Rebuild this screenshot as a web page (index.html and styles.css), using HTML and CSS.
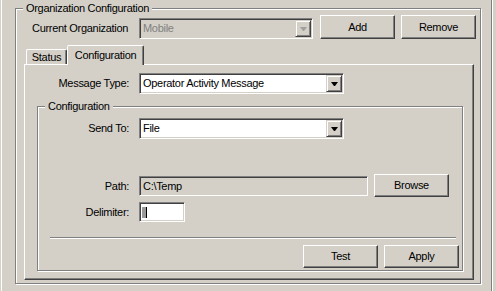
FILE: index.html
```html
<!DOCTYPE html>
<html>
<head>
  <meta charset="UTF-8">
  <title>Organization Configuration</title>
  <link rel="stylesheet" href="styles.css">
</head>
<body>
  <div class="window">
    <div class="group outer">
      <div class="group-title">Organization Configuration</div>

      <div class="org-row">
        <label class="org-label">Current Organization</label>
        <div class="combo disabled org-combo">
          <span class="combo-text">Mobile</span>
          <span class="drop"><i class="arrow"></i></span>
        </div>
        <button class="btn tall add-btn">Add</button>
        <button class="btn tall">Remove</button>
      </div>

      <div class="tabs">
        <div class="tab status-tab">Status</div>
        <div class="tab active config-tab">Configuration</div>
      </div>

      <div class="tab-page">
        <div class="row msg-row">
          <label class="field-label page-label">Message Type:</label>
          <div class="combo wide">
            <span class="combo-text">Operator Activity Message</span>
            <span class="drop"><i class="arrow"></i></span>
          </div>
        </div>

        <div class="group inner">
          <div class="group-title">Configuration</div>

          <div class="row send-row">
            <label class="field-label">Send To:</label>
            <div class="combo wide">
              <span class="combo-text">File</span>
              <span class="drop"><i class="arrow"></i></span>
            </div>
          </div>

          <div class="row path-row">
            <label class="field-label boxed">Path:</label>
            <div class="textbox readonly path-box">C:\Temp</div>
            <button class="btn browse-btn">Browse</button>
          </div>

          <div class="row delim-row">
            <label class="field-label boxed">Delimiter:</label>
            <div class="textbox delim-box"><span class="sel"></span><span class="caret"></span></div>
          </div>

          <div class="separator"></div>

          <div class="actions">
            <button class="btn">Test</button>
            <button class="btn">Apply</button>
          </div>
        </div>
      </div>
    </div>
  </div>
</body>
</html>
```

FILE: styles.css
```css
/* classic dialog look */
body {
  margin: 0;
  background: #d4d0c8;
  font-family: "Liberation Sans", Arial, sans-serif;
  font-size: 11px;
  line-height: 13px;
  letter-spacing: -0.3px;
  color: #000;
}

.window {
  box-sizing: border-box;
  width: 491px;
  height: 291px;
  margin-left: 1px;
  padding: 8px 0 0 13px;
  border-left: 1px solid #fff;
  border-right: 1px solid #808080;
  box-shadow: 1px 0 0 #fff;
}

/* etched group boxes */
.group {
  box-sizing: border-box;
  border: 1px solid #808080;
  box-shadow: inset 1px 1px 0 #fff, 1px 1px 0 #fff;
}
.group-title {
  display: table;
  margin: -7px 0 0 7px;
  padding: 0 3px;
  background: #d4d0c8;
}
.outer {
  width: 466px;
  height: 276px;
}
.inner {
  width: 426px;
  height: 165px;
  margin: 12px 0 0 12px;
}

/* top row */
.org-row {
  display: flex;
  align-items: flex-end;
  height: 24px;
  padding-left: 16px;
}
.org-label {
  width: 107px;
  line-height: 21px;
}
.org-combo {
  width: 174px;
  margin-right: 7px;
}
.add-btn {
  margin-right: 6px;
}

/* buttons */
.btn {
  box-sizing: border-box;
  width: 75px;
  height: 23px;
  padding: 0;
  font: inherit;
  letter-spacing: inherit;
  color: #000;
  background: #d4d0c8;
  border: 1px solid;
  border-color: #fff #404040 #404040 #fff;
  box-shadow: inset -1px -1px 0 #808080;
}
.btn.tall {
  height: 24px;
}

/* combo boxes */
.combo {
  box-sizing: border-box;
  display: flex;
  height: 21px;
  padding: 1px;
  background: #fff;
  border: 1px solid;
  border-color: #808080 #fff #fff #808080;
  box-shadow: inset 1px 1px 0 #404040, inset -1px -1px 0 #d4d0c8;
}
.combo.wide {
  width: 205px;
}
.combo-text {
  flex: 1;
  padding-left: 2px;
  line-height: 17px;
  white-space: nowrap;
  overflow: hidden;
}
.drop {
  display: flex;
  align-items: center;
  justify-content: center;
  box-sizing: border-box;
  width: 16px;
  height: 17px;
  background: #d4d0c8;
  border: 1px solid;
  border-color: #d4d0c8 #404040 #404040 #d4d0c8;
  box-shadow: inset 1px 1px 0 #fff, inset -1px -1px 0 #808080;
}
.arrow {
  width: 1px;
  height: 0;
  border-left: 3px solid transparent;
  border-right: 3px solid transparent;
  border-top: 4px solid #000;
}
.combo.disabled {
  background: #d4d0c8;
  color: #808080;
}
.combo.disabled .arrow {
  border-top-color: #a0a0a0;
}

/* tabs */
.tabs {
  display: flex;
  align-items: flex-end;
  height: 19px;
  margin: 6px 0 0 10px;
}
.tab {
  box-sizing: border-box;
  height: 15px;
  padding-top: 1px;
  line-height: 13px;
  text-align: center;
  border: 1px solid;
  border-bottom: none;
  border-color: #fff #404040 transparent #fff;
  border-radius: 2px 2px 0 0;
  box-shadow: inset -1px 0 0 #808080;
}
.status-tab {
  width: 41px;
}
.config-tab {
  width: 77px;
}
.tab.active {
  position: relative;
  z-index: 1;
  height: 20px;
  margin-bottom: -1px;
  padding-top: 3px;
  background: #d4d0c8;
}

.tab-page {
  box-sizing: border-box;
  width: 450px;
  height: 216px;
  margin-left: 8px;
  border: 1px solid;
  border-color: #fff #404040 #404040 #fff;
  box-shadow: inset -1px -1px 0 #808080;
}

/* form rows */
.row {
  display: flex;
  align-items: flex-start;
}
.field-label {
  width: 91px;
  margin-right: 10px;
  text-align: right;
  line-height: 21px;
}
.page-label {
  width: 104px;
}
.msg-row {
  margin-top: 8px;
}
.send-row {
  margin-top: 5px;
}
.path-row {
  margin-top: 35px;
}
.delim-row {
  margin-top: 5px;
}
.field-label.boxed {
  line-height: 20px;
}
.path-row .field-label,
.path-box {
  margin-top: 2px;
}

.textbox {
  box-sizing: border-box;
  height: 20px;
  padding: 0 2px;
  line-height: 18px;
  background: #fff;
  border: 1px solid;
  border-color: #808080 #fff #fff #808080;
  box-shadow: inset 1px 1px 0 #404040, inset -1px -1px 0 #d4d0c8;
}
.textbox.readonly {
  background: #d4d0c8;
}
.path-box {
  width: 229px;
  padding-left: 3px;
}
.browse-btn {
  margin-left: 6px;
}
.delim-box {
  display: flex;
  align-items: center;
  width: 46px;
}
.sel {
  width: 4px;
  height: 11px;
  background: #999;
}
.caret {
  width: 1px;
  height: 11px;
  background: #000;
}

.separator {
  width: 406px;
  margin: 15px 0 0 12px;
  border-top: 1px solid #808080;
  border-bottom: 1px solid #fff;
}

.actions {
  display: flex;
  justify-content: flex-end;
  gap: 6px;
  margin-top: 6px;
  padding-right: 3px;
}
```
